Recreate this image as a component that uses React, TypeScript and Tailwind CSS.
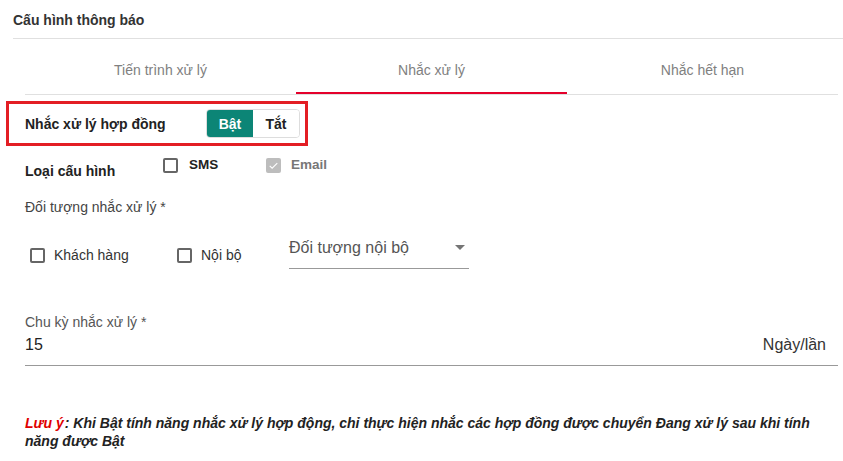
import React, { useState } from 'react';

const font = { fontFamily: '"Liberation Sans", Arial, sans-serif' };

const Box: React.FC<{ disabled?: boolean }> = ({ disabled }) => {
    if (disabled) {
        return (
            <span className="flex h-[15px] w-[15px] items-center justify-center rounded-[2px] bg-[#bdbdbd]">
                <svg viewBox="0 0 24 24" className="h-[13px] w-[13px]" fill="none" stroke="#ffffff" strokeWidth="2">
                    <path d="M5 12.5l4.5 4.5L19 7.5" />
                </svg>
            </span>
        );
    }
    return <span className="h-[15px] w-[15px] rounded-[2px] border-2 border-[#666666] bg-white" />;
};

const App: React.FC = () => {
    const [tab, setTab] = useState(1);
    const [on, setOn] = useState(true);
    const tabs = ['Tiến trình xử lý', 'Nhắc xử lý', 'Nhắc hết hạn'];

    return (
        <div className="min-h-[461px] w-[843px] overflow-hidden bg-white pl-[13px]" style={font}>
            {/* header */}
            <div className="border-b border-[#e0e0e0] pt-[10px] pb-[8px] text-sm leading-5 font-bold text-[#333333]">
                Cấu hình thông báo
            </div>

            <div className="pr-[5px]">
                {/* tabs */}
                <div className="mt-[7px] ml-[12px] flex border-b border-[#e0e0e0]">
                    {tabs.map((t, i) => (
                        <button
                            key={t}
                            onClick={() => setTab(i)}
                            className="relative flex h-[48px] flex-1 items-center justify-center text-sm text-[#808080]"
                        >
                            {t}
                            {tab === i && <span className="absolute bottom-0 left-0 h-[2px] w-full bg-[#e4002b]" />}
                        </button>
                    ))}
                </div>

                {/* highlighted toggle row */}
                <div className="mt-[6px] -ml-[7px] flex h-[45px] w-[302px] items-center border-[3px] border-[#e31e24] pl-[16px]">
                    <span className="w-[181px] text-sm font-bold text-[#222222]">Nhắc xử lý hợp đồng</span>
                    <div className="flex h-[29px] overflow-hidden rounded-[4px] border border-[#dddddd] text-sm font-bold">
                        <button
                            onClick={() => setOn(true)}
                            className={on ? 'w-[46px] bg-[#0c8576] text-white' : 'w-[46px] bg-white text-[#222222]'}
                        >
                            Bật
                        </button>
                        <button
                            onClick={() => setOn(false)}
                            className={!on ? 'w-[46px] bg-[#0c8576] text-white' : 'w-[46px] bg-white text-[#222222]'}
                        >
                            Tắt
                        </button>
                    </div>
                </div>

                {/* loai cau hinh */}
                <div className="mt-[9px] ml-[12px] flex items-start">
                    <span className="w-[138px] pt-[6px] text-sm leading-5 font-bold text-[#222222]">Loại cấu hình</span>
                    <label className="flex h-[20px] w-[103px] items-center">
                        <Box />
                        <span className="ml-[11px] text-[13.5px] font-bold text-[#222222]">SMS</span>
                    </label>
                    <label className="flex h-[20px] items-center">
                        <Box disabled />
                        <span className="ml-[10px] text-[13.5px] font-bold text-[#777777]">Email</span>
                    </label>
                </div>

                <div className="mt-[16px] ml-[12px] text-sm leading-5 text-[#444444]">Đối tượng nhắc xử lý *</div>

                {/* doi tuong row */}
                <div className="mt-[15px] ml-[17px] flex items-start">
                    <label className="mt-[13px] flex h-[20px] w-[147px] items-center">
                        <Box />
                        <span className="ml-[9px] text-sm text-[#333333]">Khách hàng</span>
                    </label>
                    <label className="mt-[13px] flex h-[20px] w-[112px] items-center">
                        <Box />
                        <span className="ml-[9px] text-sm text-[#333333]">Nội bộ</span>
                    </label>
                    <div className="flex w-[180px] items-center justify-between border-b border-[#999999] pt-[4px] pb-[8px]">
                        <span className="text-base leading-6 text-[#555555]">Đối tượng nội bộ</span>
                        <svg viewBox="0 0 10 5" className="mr-[4px] mb-[2px] h-[5px] w-[10px]">
                            <path d="M0 0h10L5 5z" fill="#757575" />
                        </svg>
                    </div>
                </div>

                {/* chu ky */}
                <div className="mt-[45px] ml-[12px]">
                    <div className="text-sm leading-4 text-[#555555]">Chu kỳ nhắc xử lý *</div>
                    <div className="mt-[3px] flex items-center justify-between border-b border-[#999999] pb-[8px] pr-[12px]">
                        <span className="text-base leading-6 text-[#222222]">15</span>
                        <span className="text-base leading-6 text-[#333333]">Ngày/lần</span>
                    </div>
                </div>

                {/* note */}
                <p className="mt-[48px] ml-[12px] w-[792px] text-sm leading-[18px] font-bold italic text-[#222222]">
                    <span className="mr-[1px] text-[#e00000]">Lưu ý</span>: Khi Bật tính năng nhắc xử lý hợp động, chỉ thực hiện nhắc các
                    hợp đồng được chuyển Đang xử lý sau khi tính năng được Bật
                </p>
            </div>
        </div>
    );
};

export default App;
